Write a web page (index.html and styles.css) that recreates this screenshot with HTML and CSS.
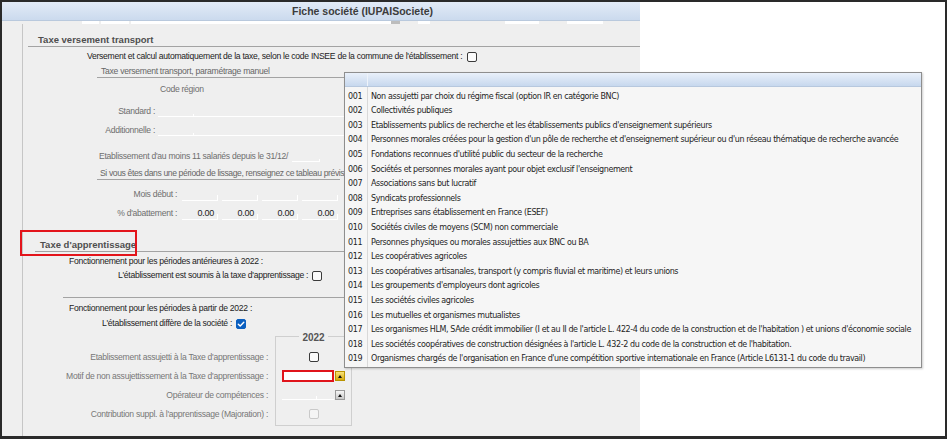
FILE: index.html
```html
<!DOCTYPE html>
<html lang="fr">
<head>
<meta charset="utf-8">
<title>Fiche société</title>
<link rel="stylesheet" href="styles.css">
</head>
<body>
<div class="frame">
  <div class="window">
    <div class="titlebar"><span>Fiche société (IUPAISociete)</span></div>
    <div class="strip">
      <span class="frag f1"></span><span class="frag f2"></span><span class="frag f3"></span><span class="knob"></span><span class="frag f4"></span><span class="frag f5"></span><span class="frag f6"></span>
    </div>
    <div class="main">
      <div class="side"></div>
      <div class="content">
        <div class="head h1">Taxe versement transport</div>
        <div class="row r-auto"><span>Versement et calcul automatiquement de la taxe, selon le code INSEE de la commune de l'établissement :</span><i class="cb"></i></div>
        <div class="sub s1">Taxe versement transport, paramétrage manuel</div>
        <div class="row r-code">Code région</div>
        <div class="row r-field r-std"><span class="lbl">Standard :</span><span class="in w35"></span><span class="in wlong"></span></div>
        <div class="row r-field r-add"><span class="lbl">Additionnelle :</span><span class="in w35"></span><span class="in wlong"></span></div>
        <div class="row r-etab"><span>Etablissement d'au moins 11 salariés depuis le 31/12/</span><span class="in w28"></span></div>
        <div class="sub s2">Si vous êtes dans une période de lissage, renseignez ce tableau prévis</div>
        <div class="row r-grid r-mois"><span class="lbl2">Mois début :</span><span class="cell"></span><span class="cell"></span><span class="cell"></span><span class="cell"></span></div>
        <div class="row r-grid r-abat"><span class="lbl2">% d'abattement :</span><span class="cell">0.00</span><span class="cell">0.00</span><span class="cell">0.00</span><span class="cell">0.00</span></div>

        <div class="head h2">Taxe d'apprentissage</div>
        <div class="row f-ant">Fonctionnement pour les périodes antérieures à 2022 :</div>
        <div class="row r-soumis"><span>L'établissement est soumis à la taxe d'apprentissage :</span><i class="cb"></i></div>
        <div class="sep"></div>
        <div class="row f-new">Fonctionnement pour les périodes à partir de 2022 :</div>
        <div class="row r-diff"><span>L'établissement diffère de la société :</span><i class="cb checked"><svg viewBox="0 0 10 10" width="10" height="10"><path d="M2.3 5.2 L4.2 7 L7.8 3.2" fill="none" stroke="#fff" stroke-width="1.4" stroke-linecap="round" stroke-linejoin="round"/></svg></i></div>

        <div class="grp">
          <div class="grp-labels">
            <div>Etablissement assujetti à la Taxe d'apprentissage :</div>
            <div>Motif de non assujettissement à la Taxe d'apprentissage :</div>
            <div>Opérateur de compétences :</div>
            <div>Contribution suppl. à l'apprentissage (Majoration) :</div>
          </div>
          <div class="grp-box">
            <div class="grp-head"><span>2022</span></div>
            <div class="grp-body">
              <div class="g-row center"><i class="cb"></i></div>
              <div class="g-row"><span class="motif"></span><span class="btn yellow"><i class="tri"></i></span></div>
              <div class="g-row"><span class="opco"></span><span class="btn gray"><i class="tri"></i></span></div>
              <div class="g-row center"><i class="cb disabled"></i></div>
            </div>
          </div>
        </div>
      </div>
    </div>
  </div>

  <div class="redmark"></div>

  <div class="dd">
    <div class="dd-head"></div>
    <div class="dd-body">
      <div class="dd-row"><span class="code">001</span><span class="txt">Non assujetti par choix du régime fiscal (option IR en catégorie BNC)</span></div>
      <div class="dd-row"><span class="code">002</span><span class="txt">Collectivités publiques</span></div>
      <div class="dd-row"><span class="code">003</span><span class="txt">Etablissements publics de recherche et les établissements publics d'enseignement supérieurs</span></div>
      <div class="dd-row"><span class="code">004</span><span class="txt">Personnes morales créées pour la gestion d'un pôle de recherche et d'enseignement supérieur ou d'un réseau thématique de recherche avancée</span></div>
      <div class="dd-row"><span class="code">005</span><span class="txt">Fondations reconnues d'utilité public du secteur de la recherche</span></div>
      <div class="dd-row"><span class="code">006</span><span class="txt">Sociétés et personnes morales ayant pour objet exclusif l'enseignement</span></div>
      <div class="dd-row"><span class="code">007</span><span class="txt">Associations sans but lucratif</span></div>
      <div class="dd-row"><span class="code">008</span><span class="txt">Syndicats professionnels</span></div>
      <div class="dd-row"><span class="code">009</span><span class="txt">Entreprises sans établissement en France (ESEF)</span></div>
      <div class="dd-row"><span class="code">010</span><span class="txt">Sociétés civiles de moyens (SCM) non commerciale</span></div>
      <div class="dd-row"><span class="code">011</span><span class="txt">Personnes physiques ou morales assujetties aux BNC ou BA</span></div>
      <div class="dd-row"><span class="code">012</span><span class="txt">Les coopératives agricoles</span></div>
      <div class="dd-row"><span class="code">013</span><span class="txt">Les coopératives artisanales, transport (y compris fluvial et maritime) et leurs unions</span></div>
      <div class="dd-row"><span class="code">014</span><span class="txt">Les groupements d'employeurs dont agricoles</span></div>
      <div class="dd-row"><span class="code">015</span><span class="txt">Les sociétés civiles agricoles</span></div>
      <div class="dd-row"><span class="code">016</span><span class="txt">Les mutuelles et organismes mutualistes</span></div>
      <div class="dd-row"><span class="code">017</span><span class="txt">Les organismes HLM, SAde crédit immobilier (I et au II de l'article L. 422-4 du code de la construction et de l'habitation ) et unions d'économie sociale</span></div>
      <div class="dd-row"><span class="code">018</span><span class="txt">Les sociétés coopératives de construction désignées à l'article L. 432-2 du code de la construction et de l'habitation.</span></div>
      <div class="dd-row"><span class="code">019</span><span class="txt">Organismes chargés de l'organisation en France d'une compétition sportive internationale en France (Article L6131-1 du code du travail)</span></div>
    </div>
  </div>
</div>
</body>
</html>
```

FILE: styles.css
```css
* { box-sizing: border-box; }
html, body { margin: 0; padding: 0; background: #fff; }

.frame {
  width: 947px;
  height: 439px;
  border: 2px solid #2a2a2a;
  border-bottom-width: 3px;
  position: relative;
  background: #fff;
  overflow: hidden;
  display: flex;
}

.window {
  width: 638px;
  display: flex;
  flex-direction: column;
  background: #efefef;
  font-family: "Liberation Sans", Arial, sans-serif;
  font-size: 8.6px;
  letter-spacing: -0.28px;
  color: #222;
}

.titlebar {
  height: 19px;
  line-height: 19px;
  padding-left: 290px;
  background: linear-gradient(#e2ebf7, #cbdaee);
  border-bottom: 1px solid #b9c9dd;
  font-weight: bold;
  font-size: 10.5px;
  letter-spacing: 0;
  color: #3c3c3c;
  white-space: nowrap;
}

.strip {
  height: 3px;
  display: flex;
  align-items: stretch;
  padding-left: 80px;
}
.frag { background: #fff; margin-right: 2px; }
.f1 { width: 17px; }
.f2 { width: 28px; }
.f3 { width: 260px; margin-right: 0; }
.knob { width: 9px; background: #bdbdbd; margin-right: 18px; }
.f4 { width: 12px; margin-right: 75px; }
.f5 { width: 34px; margin-right: 28px; }
.f6 { width: 36px; }

.main { flex: 1; display: flex; }
.side { width: 21px; border-right: 1px solid #c6c6c6; }
.content { flex: 1; display: flex; flex-direction: column; }

.head {
  font-weight: bold;
  font-size: 9.5px;
  letter-spacing: 0;
  color: #4e4e4e;
  line-height: 13px;
  border-bottom: 1px solid #a3a3a3;
  white-space: nowrap;
}
.h1 { margin-top: 9px; margin-left: 5px; padding-left: 10px; }
.h2 { margin-top: 18px; margin-left: 12px; padding-left: 5px; }

.row { display: flex; align-items: center; white-space: nowrap; }

.cb {
  display: inline-block;
  width: 10px;
  height: 10px;
  border: 1px solid #3a3a3a;
  border-radius: 2px;
  background: #fbfbfb;
  flex: none;
}
.cb.checked { background: #0a5fc0; border-color: #0a5fc0; }
.cb.checked svg { display: block; margin: -1px; }
.cb.disabled { border-color: #c9c9c9; background: #f4f4f4; }

.r-auto { margin-top: 3px; line-height: 13px; padding-left: 64px; }
.r-auto .cb { margin-left: 5px; }

.sub {
  line-height: 11px;
  margin-left: 74px;
  padding-left: 4px;
  border-bottom: 1px solid #a3a3a3;
  color: #666;
  white-space: nowrap;
}
.s1 { margin-top: 3px; margin-right: 18px; }
.s2 { margin-top: 6px; width: 243px; padding-left: 3px; letter-spacing: -0.38px; }

.r-code { margin-top: 6px; line-height: 11px; padding-left: 137px; color: #6e6e6e; }

.r-field { height: 12px; align-items: stretch; }
.r-std { margin-top: 10px; }
.r-add { margin-top: 7px; }
.lbl { width: 132px; text-align: right; line-height: 12px; color: #6e6e6e; margin-right: 3px; }

.in {
  align-self: flex-end;
  height: 3px;
  border-bottom: 1px solid #fff;
  border-right: 1px solid #fff;
}
.w35 { width: 36px; }
.wlong { width: 180px; }
.w28 { width: 28px; margin-left: 4px; }

.r-etab { margin-top: 14px; height: 12px; align-items: stretch; padding-left: 76px; color: #6e6e6e; }
.r-etab > span:first-child { line-height: 12px; }

.r-grid { height: 13px; align-items: stretch; }
.r-mois { margin-top: 8px; }
.r-abat { margin-top: 6px; }
.lbl2 { width: 154px; text-align: right; line-height: 13px; color: #6e6e6e; margin-right: 5px; }
.cell {
  width: 36px;
  margin-right: 4px;
  flex: none;
  text-align: right;
  padding-right: 4px;
  line-height: 12px;
  border-bottom: 1px solid #fff;
  background: linear-gradient(#fff, #fff) right bottom / 1px 5px no-repeat;
  color: #222;
  font-size: 9px;
}

.f-ant { margin-top: 4px; line-height: 11px; padding-left: 46px; }
.r-soumis { margin-top: 3px; line-height: 11px; padding-left: 95px; }
.r-soumis .cb { margin-left: 4px; }
.sep { margin-top: 16px; margin-left: 40px; border-top: 1px solid #a3a3a3; }
.f-new { margin-top: 5px; line-height: 11px; padding-left: 46px; }
.r-diff { margin-top: 4px; line-height: 11px; padding-left: 79px; }
.r-diff .cb { margin-left: 4px; }

.grp { margin-top: 3px; display: flex; align-items: flex-start; }
.grp-labels {
  width: 245px;
  padding-top: 15.5px;
  text-align: right;
  color: #777;
  white-space: nowrap;
}
.grp-labels div { line-height: 19px; }
.grp-box { width: 77px; margin-left: 7px; }
.grp-head { display: flex; height: 12px; }
.grp-head::before, .grp-head::after {
  content: "";
  flex: 1;
  margin-top: 4px;
  border-top: 1px solid #cfcfcf;
}
.grp-head::before { border-left: 1px solid #cfcfcf; }
.grp-head::after { border-right: 1px solid #cfcfcf; }
.grp-head span {
  padding: 0 3px;
  line-height: 12px;
  font-weight: bold;
  font-size: 10px;
  letter-spacing: 0;
  color: #555;
}
.grp-body {
  border: 1px solid #cfcfcf;
  border-top: none;
  padding: 3.5px 0 1px;
}
.g-row { height: 19px; display: flex; align-items: center; padding-left: 6px; }
.g-row.center { justify-content: center; padding-left: 0; }
.motif {
  width: 52px;
  height: 12px;
  border: 2px solid #e0141b;
  background: #fff;
}
.opco {
  width: 52px;
  height: 10px;
  border-bottom: 1px solid #fff;
  background: linear-gradient(#fff, #fff) 34px bottom / 1px 3px no-repeat;
}
.btn {
  width: 10px;
  height: 10px;
  margin-left: 1px;
  display: flex;
  align-items: center;
  justify-content: center;
  border: 1px solid #9a9a9a;
}
.btn.yellow { background: linear-gradient(#f8e27a, #d6aa0c); border-color: #b99300; }
.btn.gray { background: linear-gradient(#f6f6f6, #c8c8c8); }
.tri {
  width: 0;
  height: 0;
  border-left: 2.5px solid transparent;
  border-right: 2.5px solid transparent;
  border-bottom: 3px solid #111;
}

.redmark {
  position: absolute;
  left: 18px;
  top: 228px;
  width: 117px;
  height: 26px;
  border: 2px solid #e3141b;
}

.dd {
  position: absolute;
  left: 342px;
  top: 70px;
  width: 578px;
  border: 1px solid #8e8e8e;
  box-shadow: 1px 1px 2px rgba(0, 0, 0, 0.2);
  background: #f6f6f6;
  font-family: "DejaVu Sans", Verdana, sans-serif;
  font-size: 8px;
  letter-spacing: -0.4px;
  color: #1e1e1e;
}
.dd-head {
  height: 14px;
  background:
    linear-gradient(to right, transparent 22px, #eef3fa 22px, #eef3fa 23px, transparent 23px),
    linear-gradient(#e9f0fa, #c7d8ee);
  border-bottom: 1px solid #b7c8de;
}
.dd-body {
  padding-top: 2.7px;
  background: linear-gradient(to right, transparent 22px, #d9d9d9 22px, #d9d9d9 23px, transparent 23px), #f6f6f6;
}
.dd-row { display: flex; height: 14.6px; line-height: 14.6px; white-space: nowrap; }
.dd-row .code { width: 23px; padding-left: 3px; flex: none; }
.dd-row .txt { padding-left: 3px; }
```
